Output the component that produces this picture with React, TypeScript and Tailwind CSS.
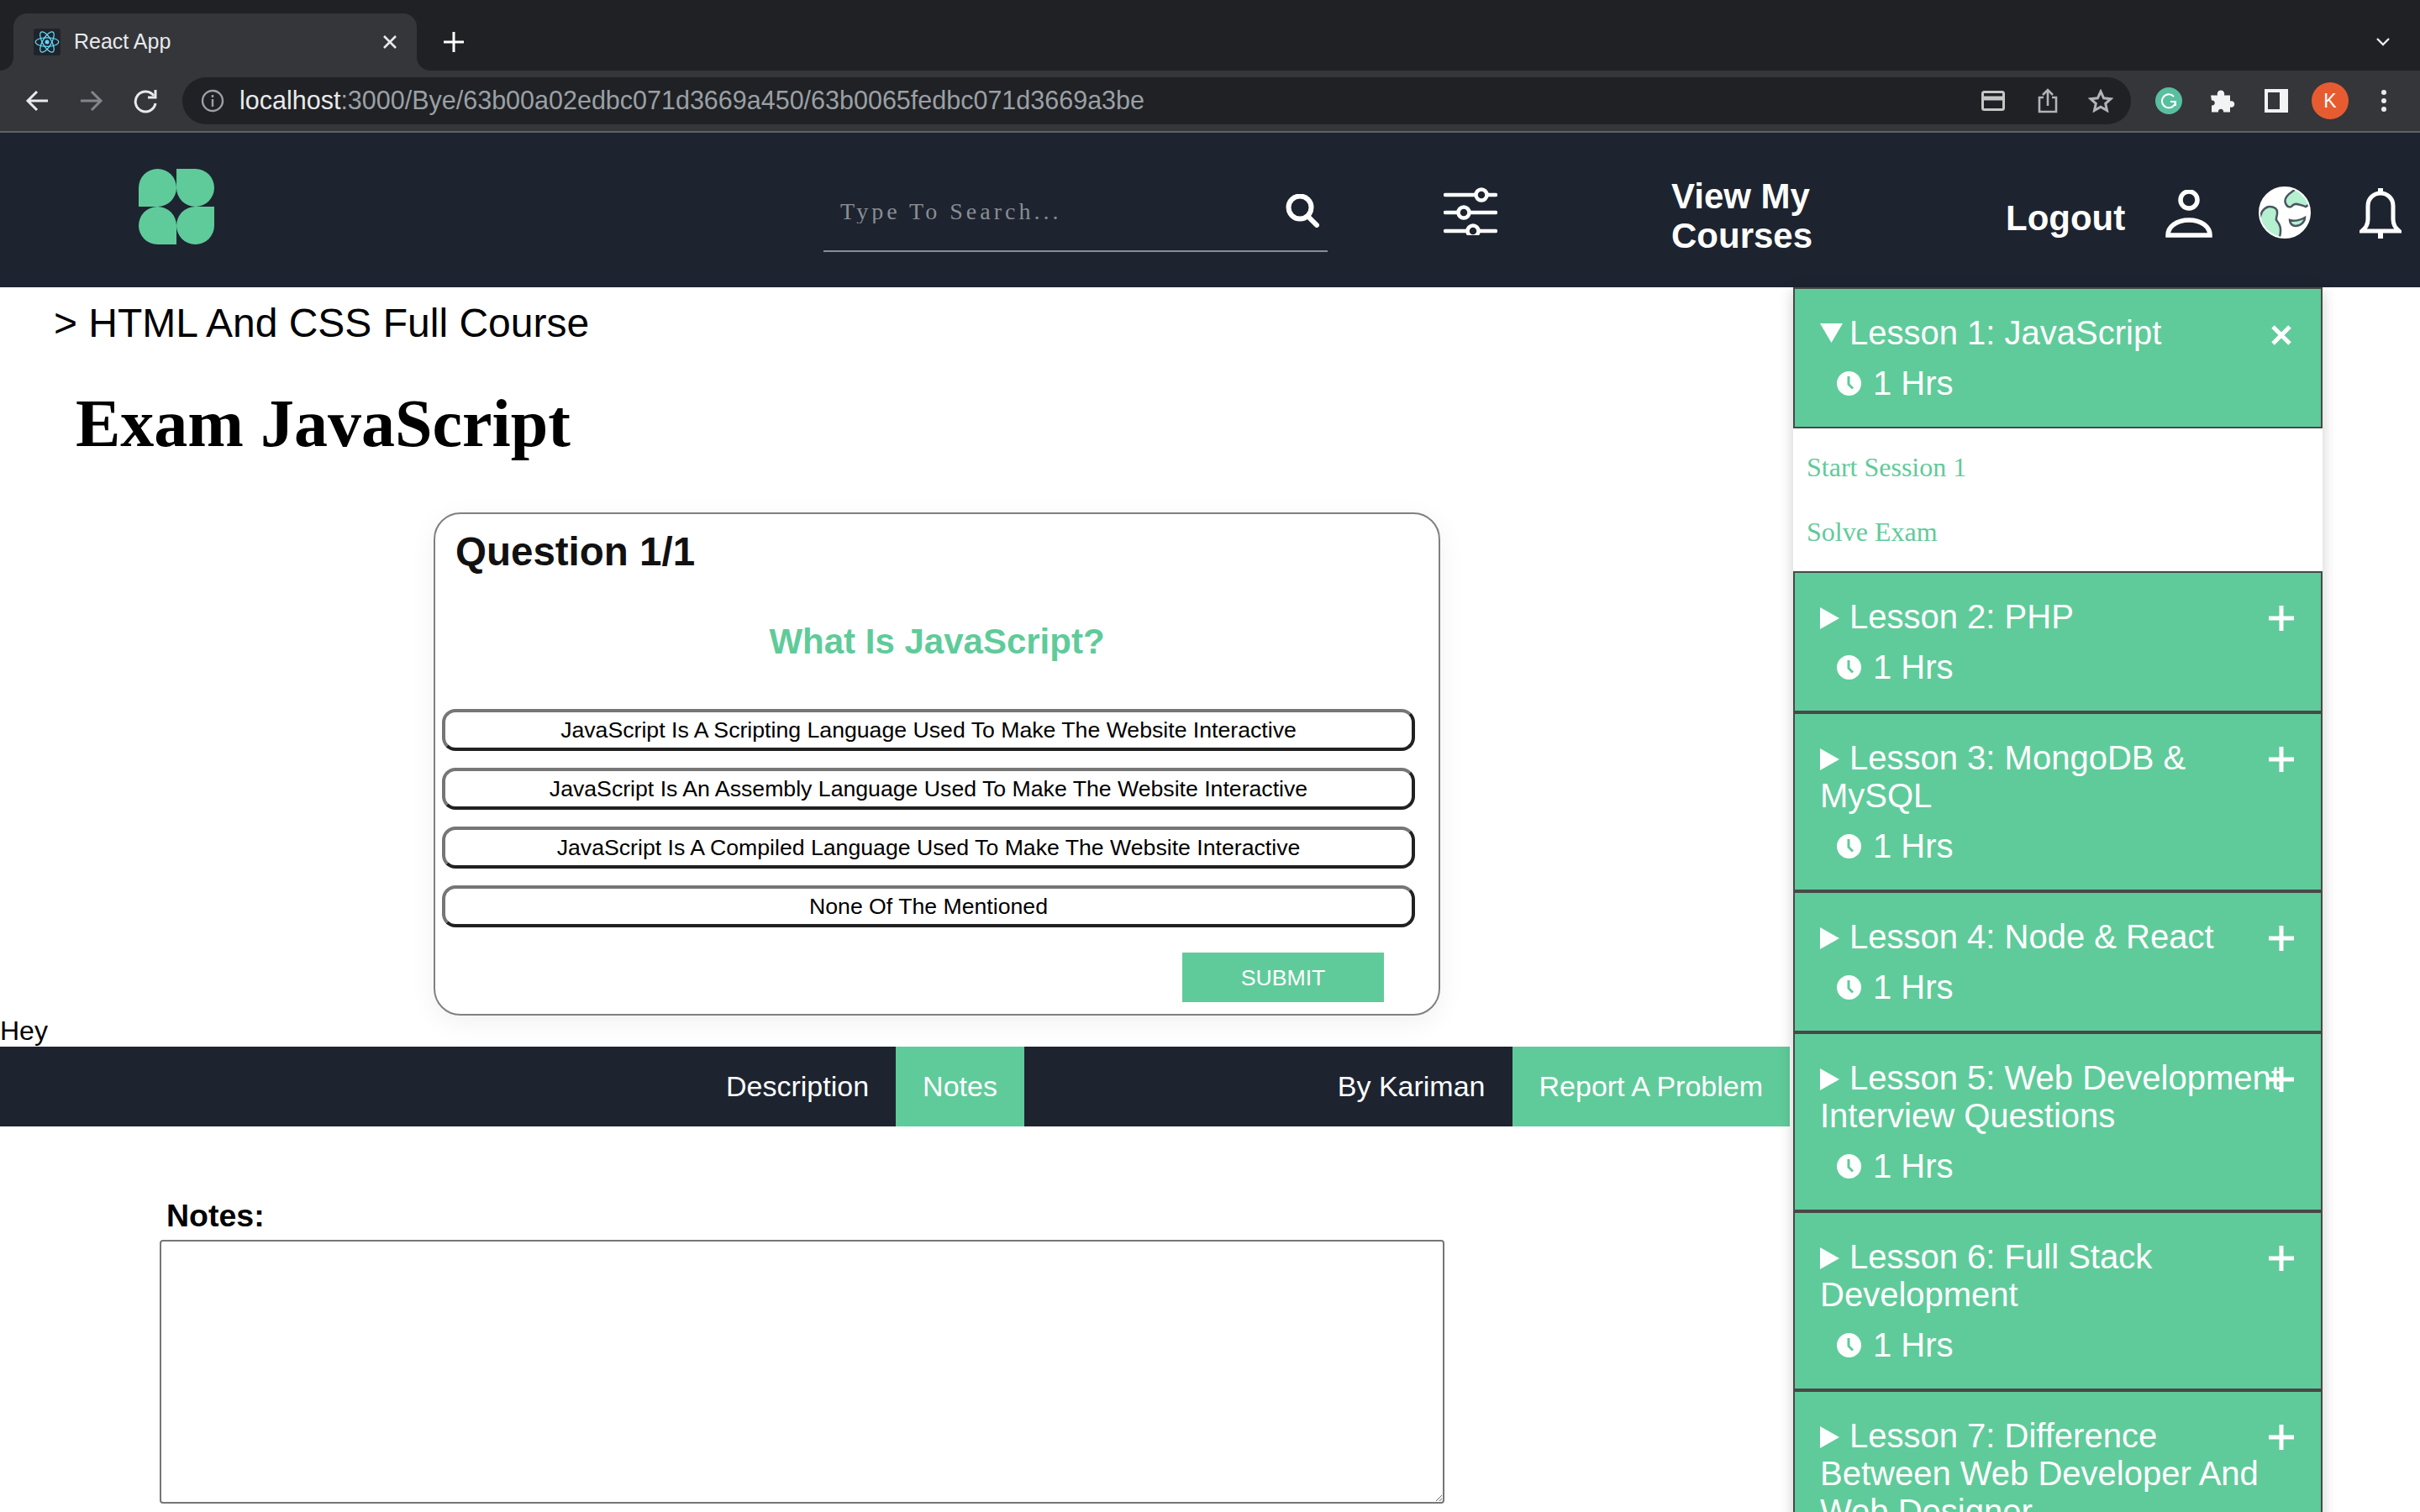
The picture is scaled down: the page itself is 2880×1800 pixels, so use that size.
import React from 'react';

const lessons = [
  { title: 'Lesson 2: PHP' },
  { title: 'Lesson 3: MongoDB & MySQL' },
  { title: 'Lesson 4: Node & React' },
  { title: 'Lesson 5: Web Development Interview Questions' },
  { title: 'Lesson 6: Full Stack Development' },
  { title: 'Lesson 7: Difference Between Web Developer And Web Designer' },
];

const answers = [
  'JavaScript Is A Scripting Language Used To Make The Website Interactive',
  'JavaScript Is An Assembly Language Used To Make The Website Interactive',
  'JavaScript Is A Compiled Language Used To Make The Website Interactive',
  'None Of The Mentioned',
];

function Clock() {
  return (
    <svg className="w-[29px] h-[29px]" viewBox="0 0 29 29">
      <circle cx="14.5" cy="14.5" r="14.5" fill="#fff" />
      <path d="M14 6v9.5l5 5" fill="none" stroke="#5fcb9a" strokeWidth="3" />
    </svg>
  );
}

function LessonHeader({ title, open }: { title: string; open?: boolean }) {
  return (
    <div className="relative border-2 border-[#484848] bg-[#5fcb9a] pt-[30px] pb-[29px] pl-[30px] pr-[42px] text-white text-[40px] leading-[45px]">
      <div>
        <svg className="inline w-[35px] h-[26px] align-[-1px]" viewBox="0 0 35 26">
          {open ? <polygon points="0,0 27,0 13.5,23" fill="#fff" /> : <polygon points="0,0 23,13 0,26" fill="#fff" />}
        </svg>
        {title}
      </div>
      <div className="flex items-center gap-[14px] ml-[20px] mt-[15px]">
        <Clock />
        <span>1 Hrs</span>
      </div>
      {open ? (
        <svg className="absolute top-[43px] right-[35px] w-[24px] h-[24px]" viewBox="0 0 24 24">
          <path d="M2 2l20 20M22 2L2 22" stroke="#fff" strokeWidth="5" />
        </svg>
      ) : (
        <svg className="absolute top-[39px] right-[32px] w-[30px] h-[30px]" viewBox="0 0 30 30">
          <path d="M15 0v30M0 15h30" stroke="#fff" strokeWidth="5" />
        </svg>
      )}
    </div>
  );
}

function BrowserChrome() {
  return (
    <div className="font-['Liberation_Sans',sans-serif]">
      <div className="h-[84px] bg-[#202124] flex items-end pl-[16px]">
        <div className="relative w-[480px] h-[68px] bg-[#35363a] rounded-t-[16px] flex items-center pl-[24px]">
          <svg className="absolute left-[-16px] bottom-0 w-[16px] h-[16px]" viewBox="0 0 16 16">
            <path d="M16 0v16H0a16 16 0 0 0 16-16z" fill="#35363a" />
          </svg>
          <svg className="absolute right-[-16px] bottom-0 w-[16px] h-[16px]" viewBox="0 0 16 16">
            <path d="M0 0v16h16A16 16 0 0 1 0 0z" fill="#35363a" />
          </svg>
          <div className="w-[32px] h-[32px] bg-[#20232a] rounded-[3px] flex items-center justify-center">
            <svg className="w-[30px] h-[30px]" viewBox="-12 -12 24 24" fill="none" stroke="#61dafb" strokeWidth="1">
              <circle r="2" fill="#61dafb" stroke="none" />
              <ellipse rx="11" ry="4.2" />
              <ellipse rx="11" ry="4.2" transform="rotate(60)" />
              <ellipse rx="11" ry="4.2" transform="rotate(120)" />
            </svg>
          </div>
          <span className="ml-[16px] text-[25px] text-[#e8eaed]">React App</span>
          <svg className="absolute left-[440px] top-[26px] w-[16px] h-[16px]" viewBox="0 0 16 16">
            <path d="M1 1l14 14M15 1L1 15" stroke="#e8eaed" strokeWidth="2.6" />
          </svg>
        </div>
        <svg className="ml-[32px] mb-[22px] w-[24px] h-[24px]" viewBox="0 0 24 24">
          <path d="M12 0v24M0 12h24" stroke="#fff" strokeWidth="3" />
        </svg>
        <svg className="ml-auto mr-[36px] mb-[29px] w-[16px] h-[10px]" viewBox="0 0 16 10">
          <path d="M1 1l7 7 7-7" fill="none" stroke="#e8eaed" strokeWidth="2.4" />
        </svg>
      </div>
      <div className="h-[74px] bg-[#35363a] border-b-2 border-[#5f6368] flex pt-[8px] items-start">
        <svg className="ml-[30px] mt-[14px] w-[28px] h-[28px]" viewBox="0 0 28 28" fill="none" stroke="#e8eaed" strokeWidth="3">
          <path d="M27 14H3M14 3L3 14l11 11" />
        </svg>
        <svg className="ml-[37px] mt-[14px] w-[28px] h-[28px]" viewBox="0 0 28 28" fill="none" stroke="#80868b" strokeWidth="3">
          <path d="M1 14h24M14 3l11 11-11 11" />
        </svg>
        <svg className="ml-[35px] mt-[13px] w-[30px] h-[30px]" viewBox="0 0 30 30" fill="none" stroke="#e8eaed" strokeWidth="3">
          <path d="M25 9a12 12 0 1 0 2 9" />
          <path d="M27 2v9h-9" />
        </svg>
        <div className="ml-[29px] w-[2319px] h-[56px] rounded-full bg-[#202124] flex items-center pl-[22px] pr-[21px]">
          <svg className="w-[28px] h-[28px]" viewBox="0 0 28 28" fill="none" stroke="#9aa0a6" strokeWidth="2.4">
            <circle cx="14" cy="14" r="12" />
            <path d="M14 12v9M14 7v3" />
          </svg>
          <span className="ml-[18px] text-[30.5px] text-[#e8eaed]">
            localhost<span className="text-[#9aa0a6]">:3000/Bye/63b00a02edbc071d3669a450/63b0065fedbc071d3669a3be</span>
          </span>
          <svg className="ml-auto w-[28px] h-[24px]" viewBox="0 0 28 24" fill="none" stroke="#c4c7c5" strokeWidth="3">
            <rect x="1.5" y="1.5" width="25" height="21" rx="2" />
            <path d="M1 9h26" strokeWidth="5" />
          </svg>
          <svg className="ml-[38px] w-[26px] h-[30px]" viewBox="0 0 26 30" fill="none" stroke="#b0b3b8" strokeWidth="2.6">
            <path d="M8 11H3v17h20V11h-5M13 21V2M7 8l6-6 6 6" />
          </svg>
          <svg className="ml-[35px] w-[30px] h-[28px]" viewBox="0 0 30 28" fill="none" stroke="#b0b3b8" strokeWidth="3">
            <path d="M15 3l3.6 7.8 8.4.9-6.3 5.6 1.8 8.2L15 21.2l-7.500 4.3 1.8-8.2L3 11.7l8.4-.9z" />
          </svg>
        </div>
        <div className="ml-[29px] mt-[12px] w-[32px] h-[32px] rounded-full bg-[#58bf9f] flex items-center justify-center">
          <svg className="w-[20px] h-[20px]" viewBox="0 0 20 20" fill="none" stroke="#fff" strokeWidth="2">
            <path d="M16 5a8 8 0 1 0 2 6h-6M18 11v5" />
          </svg>
        </div>
        <svg className="ml-[33px] mt-[13px] w-[30px] h-[30px]" viewBox="0 0 30 29">
          <path d="M1 8h8c-2-8 10-8 8 0h7v7c7-2 7 9 0 7v6h-8c1-5-7-5-6 0H2v-8c5 1 5-7 0-6z" fill="#f1f3f4" />
        </svg>
        <div className="ml-[35px] mt-[14px] w-[28px] h-[28px] bg-[#f1f3f4] pl-[4px] py-[4px]">
          <div className="w-[14px] h-[20px] bg-[#35363a]" />
        </div>
        <div className="ml-[28px] mt-[6px] w-[44px] h-[44px] rounded-full bg-[#e65c30] flex items-center justify-center text-white text-[23px]">K</div>
        <div className="ml-[39px] mt-[15px] flex flex-col gap-[4px]">
          <div className="w-[6px] h-[6px] rounded-full bg-[#e8eaed]" />
          <div className="w-[6px] h-[6px] rounded-full bg-[#e8eaed]" />
          <div className="w-[6px] h-[6px] rounded-full bg-[#e8eaed]" />
        </div>
      </div>
    </div>
  );
}

function Nav() {
  return (
    <div className="h-[184px] bg-[#1d2430] flex items-start text-white font-bold text-[42px]">
      <svg className="ml-[165px] mt-[43px] w-[90px] h-[90px]" viewBox="0 0 90 90" fill="#5fcb9a">
        <path d="M0 45V22.5A22.500 22.500 0 1 1 22.500 45z" />
        <path d="M45 0h22.500A22.500 22.500 0 1 1 45 22.500z" />
        <path d="M45 90H22.500A22.500 22.500 0 1 1 45 67.500z" />
        <path d="M90 45v22.500A22.500 22.500 0 1 1 67.500 45z" />
      </svg>
      <div className="ml-[725px] mt-[80px] w-[600px] h-[62px] border-b-2 border-[#8b8d92] flex items-start">
        <input
          placeholder="Type To Search..."
          className="ml-[20px] mt-[0px] h-[28px] w-[500px] bg-transparent outline-none font-['Liberation_Serif',serif] font-normal text-[28px] tracking-[4px] placeholder:text-[#8b8d92]"
        />
        <svg className="ml-[30px] mt-[-7px] w-[40px] h-[40px]" viewBox="0 0 40 40" fill="none" stroke="#fff" strokeWidth="6">
          <circle cx="17" cy="16" r="13.500" />
          <path d="M27 27l10 10" strokeLinecap="round" />
        </svg>
      </div>
      <svg className="ml-[138px] mt-[64px] w-[64px] h-[58px]" viewBox="0 0 64 58" fill="none" stroke="#fff" strokeWidth="4.500" strokeLinecap="round">
        <path d="M2 10h60M2 31h60M2 53h60" />
        <circle cx="45" cy="10" r="6.500" fill="#1d2430" />
        <circle cx="24" cy="31" r="6.500" fill="#1d2430" />
        <circle cx="35" cy="53" r="6.500" fill="#1d2430" />
      </svg>
      <div className="ml-[207px] mt-[52px] w-[200px] leading-[47px]">View My Courses</div>
      <div className="ml-[198px] mt-[70px]">Logout</div>
      <svg className="ml-[48px] mt-[68px] w-[56px] h-[57px]" viewBox="0 0 56 57" fill="none" stroke="#fff" strokeWidth="5.500">
        <circle cx="28" cy="12" r="10" />
        <path d="M3 54c0-10 10-18 25-18s25 8 25 18z" />
      </svg>
      <svg className="ml-[55px] mt-[64px] w-[62px] h-[62px]" viewBox="0 0 62 62">
        <defs>
          <clipPath id="globe"><circle cx="31" cy="31" r="30" /></clipPath>
        </defs>
        <circle cx="31" cy="31" r="30" fill="#fff" />
        <g clipPath="url(#globe)" fill="#b5f0d0" stroke="#4a5560" strokeWidth="2.500">
          <path d="M40 6c-6 4-10 9-8 14 2 5 6 6 9 2 3-3 9 0 15 2l6-4L48 0z" />
          <path d="M4 30c4-6 10-8 16-4 5 4 0 10 1 14 3 4 7 8 4 20l-9 2L-2 46z" />
          <path d="M37 40c5 2 13 0 18-3 0 5-5 10-11 10-4 0-7-3-7-7z" />
        </g>
        <circle cx="31" cy="31" r="30" fill="none" stroke="#fff" strokeWidth="2" />
      </svg>
      <svg className="ml-[58px] mt-[65px] w-[50px] h-[62px]" viewBox="0 0 50 62" fill="none" stroke="#fff" strokeWidth="5">
        <path d="M3 52c5-4 7-8 7-14V22c0-9 7-15 15-15s15 6 15 15v16c0 6 2 10 7 14z" />
        <path d="M25 1v7M25 52v9" strokeWidth="6" />
      </svg>
    </div>
  );
}

function Question() {
  return (
    <div className="ml-[516px] mt-[62px] w-[1198px] h-[599px] border-2 border-[#808080] rounded-[32px] bg-white shadow-[0_8px_32px_rgba(0,0,0,0.06)]">
      <div className="pl-[24px] pt-[17px] font-bold text-[47.5px] leading-[55px] text-[#111]">Question 1/1</div>
      <div className="mt-[56px] text-center font-bold text-[42px] leading-[48px] text-[#5fcb9a]">What Is JavaScript?</div>
      <div className="mt-[56px] ml-[8px] w-[1158px] flex flex-col gap-[20px]">
        {answers.map((answer) => (
          <button
            key={answer}
            className="h-[50px] rounded-[16px] border-[4px] border-t-[#767676] border-l-[#767676] border-b-[#212121] border-r-[#212121] text-[26.670px] text-black bg-white"
          >
            {answer}
          </button>
        ))}
      </div>
      <button className="mt-[30px] ml-[889px] w-[240px] h-[59px] bg-[#5fcb9a] text-white text-[26.670px]">SUBMIT</button>
    </div>
  );
}

function App() {
  return (
    <div className="h-screen overflow-hidden bg-white font-['Liberation_Sans',sans-serif] text-black">
      <BrowserChrome />
      <Nav />
      <div className="flex items-start">
        <div className="w-[2130px]">
          <div className="pl-[64px] mt-[15px] text-[48px] leading-[55px]">&gt; HTML And CSS Full Course</div>
          <h1 className="pl-[90px] mt-[49px] font-['Liberation_Serif',serif] font-bold text-[80px] leading-[87px]">Exam JavaScript</h1>
          <Question />
          <div className="text-[32px] leading-[37px]">Hey</div>
          <div className="h-[95px] bg-[#1d2430] flex text-white text-[34px] leading-[95px]">
            <div className="ml-[832px] px-[32px]">Description</div>
            <div className="px-[32px] bg-[#5fcb9a]">Notes</div>
            <div className="ml-auto px-[32px]">By Kariman</div>
            <div className="px-[32px] bg-[#5fcb9a]">Report A Problem</div>
          </div>
          <div className="ml-[198px] mt-[85px] font-bold text-[37.5px] leading-[42px]">Notes:</div>
          <textarea className="block ml-[190px] mt-[8px] w-[1529px] h-[314px] border-2 border-[#767676] rounded-[4px] resize" />
        </div>
        <div className="ml-[4px] w-[630px] shadow-[0_4px_16px_rgba(0,0,0,0.2)] bg-white">
          <LessonHeader title="Lesson 1: JavaScript" open />
          <div className="h-[170px] pl-[16px] pt-[28px] flex flex-col gap-[40px] font-['Liberation_Serif',serif] text-[32px] leading-[37px] text-[#5fcb9a]">
            <div>Start Session 1</div>
            <div>Solve Exam</div>
          </div>
          {lessons.map((lesson) => (
            <LessonHeader key={lesson.title} title={lesson.title} />
          ))}
        </div>
      </div>
    </div>
  );
}

export default App;
